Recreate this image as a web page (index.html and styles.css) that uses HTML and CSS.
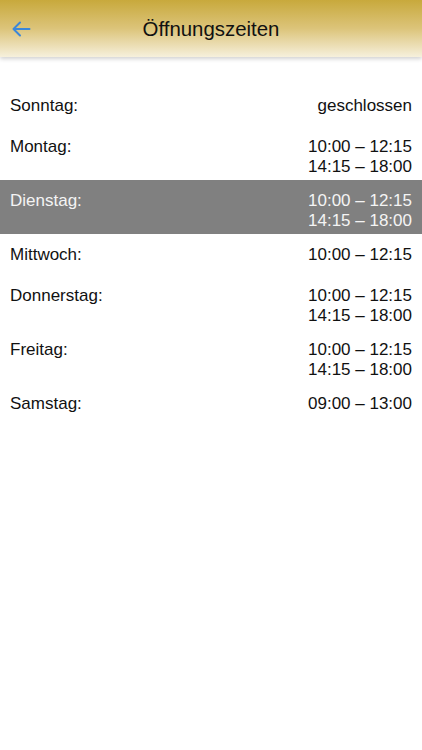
FILE: index.html
```html
<!DOCTYPE html>
<html lang="de">
<head>
<meta charset="utf-8">
<title>Öffnungszeiten</title>
<link rel="stylesheet" href="styles.css">
</head>
<body>
<header class="bar">
  <button class="back" aria-label="Zurück">
    <svg width="22" height="22" viewBox="0 0 22 22"><path d="M19.5 11H3.5M10 4.5L3.5 11L10 17.5" fill="none" stroke="#3b87d9" stroke-width="2" stroke-linecap="round" stroke-linejoin="round"/></svg>
  </button>
  <h1 class="title">Öffnungszeiten</h1>
</header>
<main class="list">
  <div class="row"><span class="day">Sonntag:</span><span class="times">geschlossen</span></div>
  <div class="row"><span class="day">Montag:</span><span class="times">10:00 – 12:15<br>14:15 – 18:00</span></div>
  <div class="row today"><span class="day">Dienstag:</span><span class="times">10:00 – 12:15<br>14:15 – 18:00</span></div>
  <div class="row"><span class="day">Mittwoch:</span><span class="times">10:00 – 12:15</span></div>
  <div class="row"><span class="day">Donnerstag:</span><span class="times">10:00 – 12:15<br>14:15 – 18:00</span></div>
  <div class="row"><span class="day">Freitag:</span><span class="times">10:00 – 12:15<br>14:15 – 18:00</span></div>
  <div class="row"><span class="day">Samstag:</span><span class="times">09:00 – 13:00</span></div>
</main>
</body>
</html>
```
FILE: styles.css
```css
* { box-sizing: border-box; }
html, body { margin: 0; padding: 0; background: #fff; }
body { font-family: "Liberation Sans", Arial, sans-serif; color: #111; }

.bar {
  position: relative;
  height: 57px;
  display: flex;
  align-items: center;
  justify-content: center;
  background: linear-gradient(to bottom, #c8a93c 0%, #dcc47a 50%, #f6f0dc 100%);
  box-shadow: 0 2px 4px rgba(0,0,0,0.18);
}
.back {
  position: absolute;
  left: 9px;
  top: 17px;
  width: 24px;
  height: 24px;
  padding: 0;
  border: 0;
  background: none;
  display: flex;
  align-items: center;
  justify-content: center;
}
.title {
  margin: 0;
  padding-top: 1px;
  font-size: 20.4px;
  font-weight: normal;
  color: #111;
}

.list { padding-top: 28px; }
.row {
  display: flex;
  justify-content: space-between;
  padding: 11px 10px 3px;
  min-height: 41px;
  font-size: 17px;
  line-height: 20px;
}
.times { text-align: right; }
.row.today { background: #808080; color: #f4f4f4; }
```
